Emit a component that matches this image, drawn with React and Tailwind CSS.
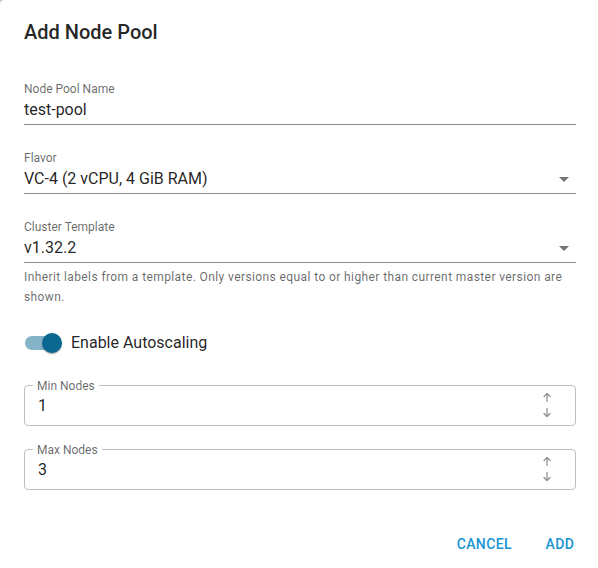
import React from "react";

function UnderlineField({ label, value, select, className = "" }) {
  return (
    <div className={"flex flex-col " + className}>
      <div className="text-[12px] leading-4 text-black/60">{label}</div>
      <div className="mt-[1px] pb-[3px] border-b border-black/45 flex items-center h-[27px]">
        <div className="flex-1 text-[16px] leading-[23px] text-black/87">{value}</div>
        {select && (
          <svg width="24" height="24" viewBox="0 0 24 24" className="shrink-0 -my-[1px]">
            <path d="M7 10l5 5 5-5z" fill="#757575" />
          </svg>
        )}
      </div>
    </div>
  );
}

function SpinArrows() {
  return (
    <svg width="10" height="26" viewBox="0 0 10 26" className="shrink-0">
      <g stroke="#8a8a8a" strokeWidth="1.2" fill="none" strokeLinecap="round">
        <path d="M5 1.5V9.5" />
        <path d="M2 4.5L5 1.5L8 4.5" />
        <path d="M5 16.5V24.5" />
        <path d="M2 21.5L5 24.5L8 21.5" />
      </g>
    </svg>
  );
}

function OutlinedNumber({ label, value, className = "" }) {
  return (
    <fieldset className={"border border-black/25 rounded-[4px] px-[13px] pb-[8px] m-0 " + className}>
      <legend className="ml-[-5px] px-[4px] text-[12px] leading-4 text-black/60">{label}</legend>
      <div className="flex items-center h-[23px] pr-[10px]">
        <div className="flex-1 text-[16px] leading-[23px] text-black/87">{value}</div>
        <SpinArrows />
      </div>
    </fieldset>
  );
}

export default function App() {
  return (
    <div className="w-[598px] h-[568px] overflow-hidden bg-[#bdbdbd]" style={{ fontFamily: "Roboto, 'Liberation Sans', sans-serif" }}>
      <div className="w-full h-full bg-white rounded-tl-[4px] flex flex-col">
        <div className="h-16 px-6 flex items-center text-[20px] leading-8 font-medium text-black/87 shrink-0">
          Add Node Pool
        </div>
        <div className="pl-6 pr-[22px] flex flex-col">
          <UnderlineField className="mt-[17px]" label="Node Pool Name" value="test-pool" />
          <UnderlineField className="mt-[25px]" label="Flavor" value="VC-4 (2 vCPU, 4 GiB RAM)" select />
          <UnderlineField className="mt-[25px]" label="Cluster Template" value="v1.32.2" select />
          <div className="mt-[5px] text-[12px] leading-[1.66] tracking-[0.4px] text-black/60">
            Inherit labels from a template. Only versions equal to or higher than current master version are shown.
          </div>
          <div className="mt-[16px] -ml-[11px] flex items-center">
            <div className="relative w-[58px] h-[38px] shrink-0">
              <div className="absolute left-[12px] top-[12px] w-[34px] h-[14px] rounded-[7px] bg-[#0b6891] opacity-50" />
              <div className="absolute left-[29px] top-[9px] w-5 h-5 rounded-full bg-[#0b6891] shadow-[0_2px_1px_-1px_rgba(0,0,0,0.2),0_1px_1px_0_rgba(0,0,0,0.14),0_1px_3px_0_rgba(0,0,0,0.12)]" />
            </div>
            <div className="text-[16px] leading-6 text-black/87">Enable Autoscaling</div>
          </div>
          <OutlinedNumber className="mt-4" label="Min Nodes" value="1" />
          <OutlinedNumber className="mt-4" label="Max Nodes" value="3" />
        </div>
        <div className="mt-[29px] pl-2 pr-[6px] py-2 flex justify-end gap-2">
          <button className="h-9 min-w-16 px-2 text-[14px] font-medium tracking-[0.4px] uppercase text-[#1795d2]">Cancel</button>
          <button className="h-9 min-w-16 px-2 text-[14px] font-medium tracking-[0.4px] uppercase text-[#1795d2]">Add</button>
        </div>
      </div>
    </div>
  );
}
